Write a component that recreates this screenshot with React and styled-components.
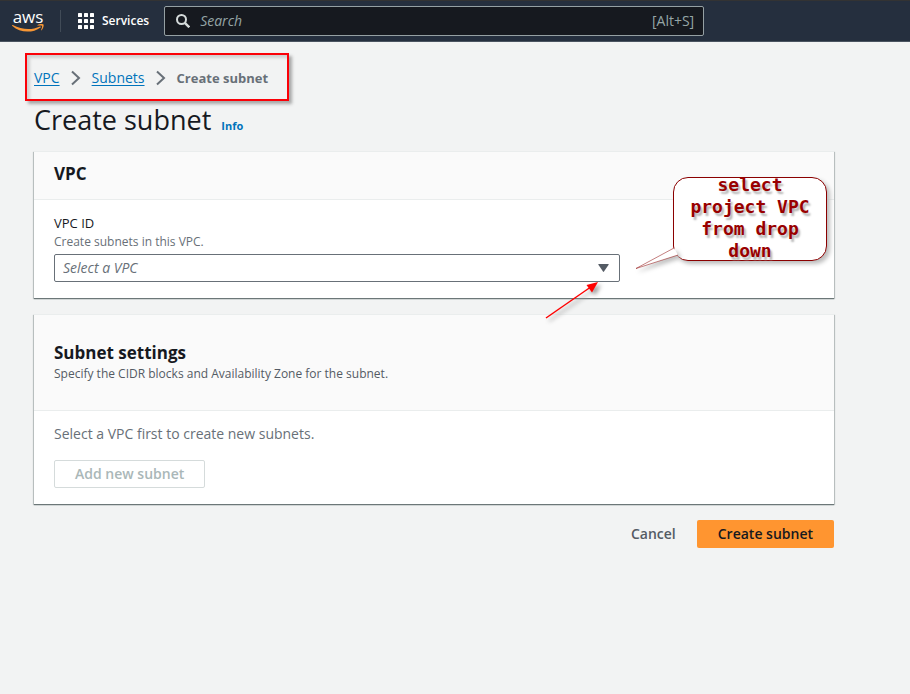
import React from 'react';
import styled, { createGlobalStyle } from 'styled-components';

const GlobalStyle = createGlobalStyle`
  * { box-sizing: border-box; }
  body {
    margin: 0;
    background: #f2f3f3;
    color: #16191f;
    font-family: "Open Sans", "Noto Sans", sans-serif;
    font-size: 14px;
    line-height: 20px;
  }
  h1, h2, p, ol { margin: 0; padding: 0; }
  button, input, select { font: inherit; }
`;

const TopBar = styled.header`
  display: flex;
  align-items: center;
  height: 42px;
  padding-left: 12px;
  background: #252f3e;
  border-top: 1px solid #333333;
  border-bottom: 1px solid #4b5460;
`;

const LogoLink = styled.a`
  display: flex;
  flex-direction: column;
  align-items: center;
  width: 32px;
  color: #ffffff;
  font-size: 17px;
  font-weight: 500;
  line-height: 15px;
  text-decoration: none;
  svg { display: block; }
`;

const Divider = styled.span`
  width: 1px;
  height: 22px;
  margin: 0 17px 0 16px;
  background: #414b57;
`;

const ServicesButton = styled.button`
  display: flex;
  align-items: center;
  gap: 8px;
  padding: 0;
  border: 0;
  background: none;
  color: #ffffff;
  font-size: 12px;
  font-weight: 600;
`;

const SearchBox = styled.label`
  display: flex;
  align-items: center;
  flex: 0 1 540px;
  height: 30px;
  margin-left: 15px;
  padding: 0 9px 0 11px;
  background: #16191f;
  border: 1px solid #95a0a3;
  border-radius: 2px;
  color: #95a5a6;
`;

const SearchInput = styled.input`
  flex: 1;
  min-width: 0;
  margin-left: 10px;
  padding: 0;
  border: 0;
  outline: 0;
  background: none;
  color: #ffffff;
  &::placeholder { color: #95a5a6; font-style: italic; opacity: 1; }
`;

const Page = styled.main`
  max-width: 834px;
  padding: 11px 0 24px 34px;
`;

const Breadcrumbs = styled.nav`
  width: 264px;
  margin-left: -9px;
  padding: 13px 7px 11px;
  border: 2px solid #fb0007;
  box-shadow: 3px 3px 3px #a8a8a8, inset 3px 3px 3px #d0d0d0;
  ol {
    display: flex;
    align-items: center;
    height: 20px;
    list-style: none;
  }
  li { display: flex; align-items: center; }
  svg { margin: 0 11px; }
`;

const Crumb = styled.a`
  color: #0073bb;
  text-underline-offset: 2px;
`;

const CurrentCrumb = styled.span`
  color: #687078;
  font-size: 13px;
  font-weight: 700;
`;

const TitleRow = styled.div`
  display: flex;
  align-items: baseline;
  gap: 10px;
  margin: 1px 0 13px;
`;

const Title = styled.h1`
  font-size: 27px;
  font-weight: 400;
  line-height: 36px;
`;

const InfoLink = styled.a`
  color: #0073bb;
  font-size: 11px;
  font-weight: 700;
  text-decoration: none;
`;

const Card = styled.section`
  position: relative;
  z-index: ${({ $raised }) => ($raised ? 1 : 0)};
  margin-bottom: 16px;
  background: #ffffff;
  border-top: 1px solid #eaeded;
  box-shadow: 0 1px 1px #6c7778, -1px 1px 1px #c8cdcd, 1px 1px 1px #c8cdcd;
`;

const CardHeader = styled.div`
  padding: ${({ $roomy }) => ($roomy ? '26px 20px 27px' : '10px 20px 13px')};
  background: #fafafa;
  border-bottom: 1px solid #eaeded;
`;

const CardTitle = styled.h2`
  font-size: 17px;
  font-weight: 700;
  line-height: 24px;
`;

const Hint = styled.p`
  color: #545b64;
  font-size: 12px;
  line-height: 18px;
`;

const CardBody = styled.div`
  padding: 13px 20px 16px;
  p { color: #687078; }
`;

const FieldLabel = styled.label`
  display: block;
  font-size: 13px;
`;

const SelectWrap = styled.div`
  position: relative;
  width: calc(75% - 4px);
  margin-top: 3px;
  svg {
    position: absolute;
    top: 10px;
    right: 11px;
    pointer-events: none;
  }
`;

const Select = styled.select`
  display: block;
  width: 100%;
  height: 28px;
  padding: 0 32px 0 8px;
  appearance: none;
  background: #ffffff;
  border: 1px solid #687078;
  border-radius: 2px;
  color: #687078;
  font-style: italic;
`;

const Button = styled.button`
  height: 28px;
  padding: 0 20px;
  border: 1px solid ${({ $kind }) => ($kind === 'outline' ? '#d5dbdb' : 'transparent')};
  border-radius: 2px;
  background: ${({ $kind }) => ($kind === 'primary' ? '#ff9530' : $kind === 'outline' ? '#ffffff' : 'none')};
  color: ${({ $kind }) => ($kind === 'primary' ? '#16191f' : $kind === 'outline' ? '#aab7b8' : '#545b64')};
  font-weight: 600;
`;

const AddRow = styled.div`
  margin-top: 16px;
`;

const Actions = styled.div`
  display: flex;
  justify-content: flex-end;
`;

const Callout = styled.aside`
  position: absolute;
  top: 25px;
  right: 7px;
  display: flex;
  align-items: center;
  justify-content: center;
  width: 154px;
  height: 84px;
  padding: 0 14px 3px;
  background: #ffffff;
  border: 1px solid #8b0000;
  border-radius: 15px;
  box-shadow: 3px 3px 4px #bdbdbd;
  p {
    color: #990000;
    font-family: "DejaVu Sans Mono", monospace;
    font-size: 18px;
    font-weight: 700;
    line-height: 22px;
    text-align: center;
    text-shadow: 2px 3px 2px #b5b5b5;
  }
`;

const CalloutTail = styled.svg`
  position: absolute;
  left: -38px;
  bottom: -10px;
  overflow: visible;
  filter: drop-shadow(3px 3px 2px #bdbdbd);
`;

const Pointer = styled.svg`
  position: absolute;
  right: 234px;
  bottom: -21px;
  overflow: visible;
  filter: drop-shadow(3px 3px 2px #999999);
`;

function Chevron() {
  return (
    <svg width="10" height="16" viewBox="0 0 10 16" fill="none" stroke="#687078" strokeWidth="2" aria-hidden="true">
      <path d="M1 1.5 8 8 1 14.5" />
    </svg>
  );
}

export default function App() {
  return (
    <>
      <GlobalStyle />
      <TopBar>
        <LogoLink href="#home">
          aws
          <svg width="32" height="9" viewBox="0 0 32 9" aria-hidden="true">
            <path d="M0 1.3c0-.4.4-.5.8-.3C10 6 20 6.200 28 2.500c.8-.3 1.300.4.6.9C20.500 9.400 8 9 .4 2z" fill="#f79634" />
            <path d="M25.500.9c2-1.200 5.500-1.100 6-.5s-.2 4.300-2 5.900c-.4.3-.6.1-.4-.3.7-1.700 1.300-3.700.8-4.200s-2.600-.4-4.200-.3c-.5 0-.6-.3-.2-.6z" fill="#f79634" />
          </svg>
        </LogoLink>
        <Divider />
        <ServicesButton type="button">
          <svg width="16" height="16" viewBox="0 0 16 16" fill="#ffffff" aria-hidden="true">
            {[0, 6, 12].map((y) => [0, 6, 12].map((x) => (
              <rect key={`${x}-${y}`} x={x} y={y} width="4" height="4" rx="0.6" />
            )))}
          </svg>
          Services
        </ServicesButton>
        <SearchBox>
          <svg width="14" height="14" viewBox="0 0 14 14" fill="none" stroke="#d5dbdb" strokeWidth="2" aria-hidden="true">
            <circle cx="5.500" cy="5.500" r="4.500" />
            <path d="m8.800 8.800 4.500 4.500" strokeWidth="2.400" />
          </svg>
          <SearchInput type="search" placeholder="Search" aria-label="Search" />
          <span>[Alt+S]</span>
        </SearchBox>
      </TopBar>
      <Page>
        <Breadcrumbs aria-label="Breadcrumb">
          <ol>
            <li><Crumb href="#vpc">VPC</Crumb><Chevron /></li>
            <li><Crumb href="#subnets">Subnets</Crumb><Chevron /></li>
            <li><CurrentCrumb aria-current="page">Create subnet</CurrentCrumb></li>
          </ol>
        </Breadcrumbs>
        <TitleRow>
          <Title>Create subnet</Title>
          <InfoLink href="#info">Info</InfoLink>
        </TitleRow>
        <Card $raised>
          <CardHeader>
            <CardTitle>VPC</CardTitle>
          </CardHeader>
          <CardBody>
            <FieldLabel htmlFor="vpc-id">VPC ID</FieldLabel>
            <Hint id="vpc-hint">Create subnets in this VPC.</Hint>
            <SelectWrap>
              <Select id="vpc-id" aria-describedby="vpc-hint" defaultValue="">
                <option value="">Select a VPC</option>
              </Select>
              <svg width="11" height="8" viewBox="0 0 11 8" aria-hidden="true">
                <path d="M.8 0h9.400q.8 0 .4.8L6 7.600q-.5.600-1 0L.4.800Q0 0 .8 0z" fill="#545b64" />
              </svg>
            </SelectWrap>
          </CardBody>
          <Pointer width="54" height="38" viewBox="0 0 54 38" aria-hidden="true">
            <path d="M0 37 44 6.500" stroke="#ff0000" strokeWidth="1.500" />
            <path d="M52 1 40.500 4 46 11.500z" fill="#ff0000" />
          </Pointer>
          <Callout>
            <CalloutTail width="44" height="24" viewBox="0 0 44 24" aria-hidden="true">
              <path d="M38 2 0 22.500 42 9z" fill="#ffffff" />
              <path d="M38 2 0 22.500 42 9" fill="none" stroke="#8b0000" strokeWidth="0.500" />
            </CalloutTail>
            <p>select project VPC from drop down</p>
          </Callout>
        </Card>
        <Card>
          <CardHeader $roomy>
            <CardTitle>Subnet settings</CardTitle>
            <Hint>Specify the CIDR blocks and Availability Zone for the subnet.</Hint>
          </CardHeader>
          <CardBody>
            <p>Select a VPC first to create new subnets.</p>
            <AddRow>
              <Button type="button" $kind="outline" disabled>Add new subnet</Button>
            </AddRow>
          </CardBody>
        </Card>
        <Actions>
          <Button type="button" $kind="link">Cancel</Button>
          <Button type="submit" $kind="primary">Create subnet</Button>
        </Actions>
      </Page>
    </>
  );
}
